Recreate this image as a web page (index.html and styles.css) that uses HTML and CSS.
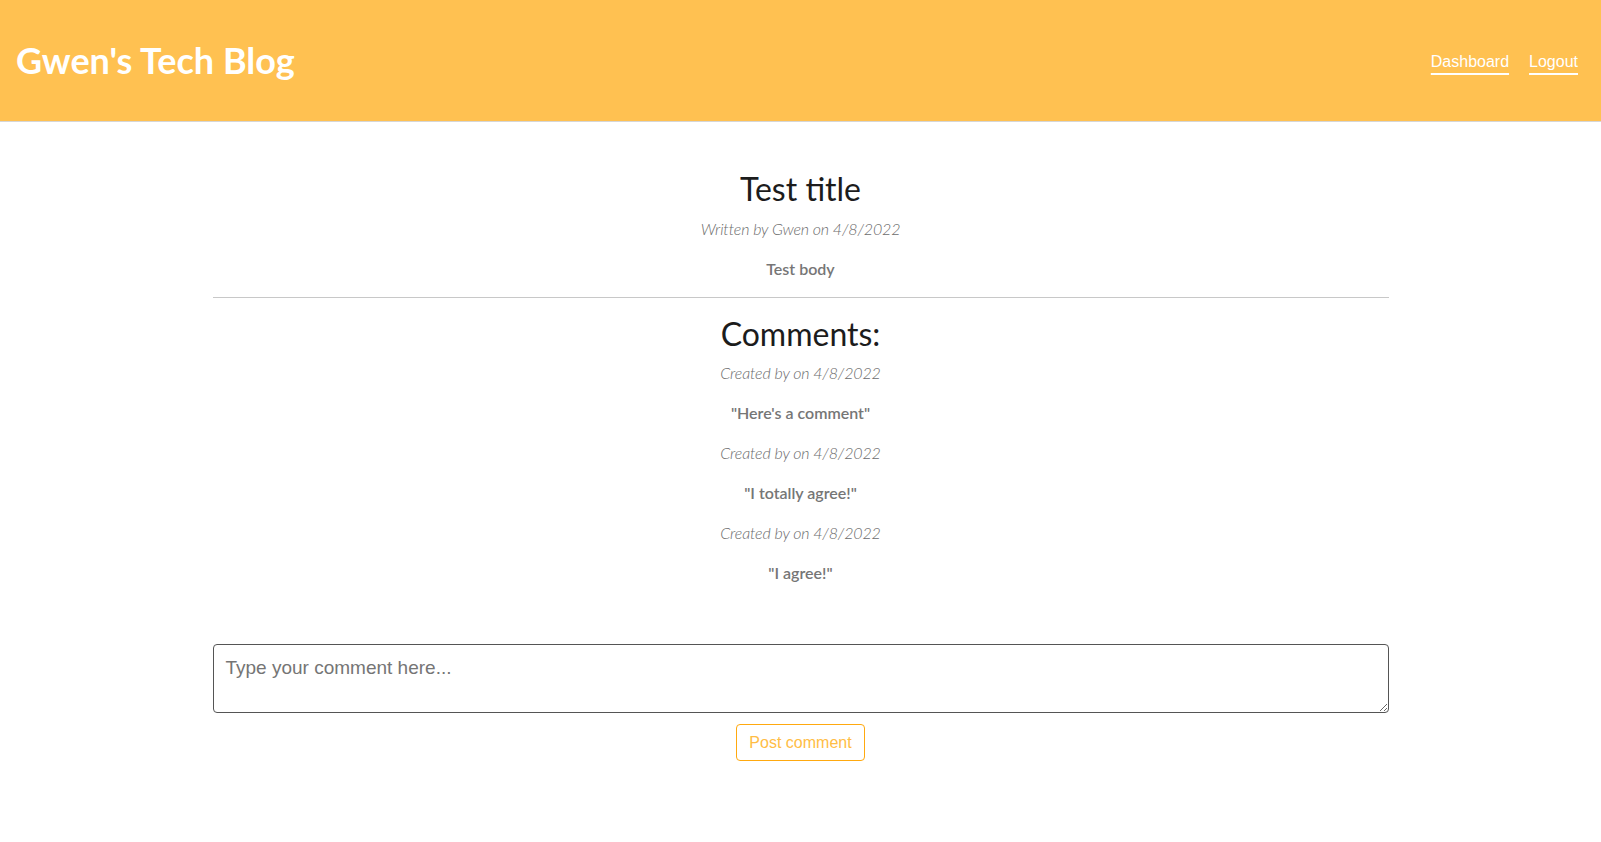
FILE: index.html
```html
<!DOCTYPE html>
<html lang="en">
<head>
<meta charset="utf-8">
<title>Gwen's Tech Blog</title>
<link rel="stylesheet" href="styles.css">
</head>
<body>
<header class="site-header">
  <h1 class="site-title">Gwen's Tech Blog</h1>
  <nav class="site-nav">
    <a href="#" class="nav-link">Dashboard</a>
    <a href="#" class="nav-link">Logout</a>
  </nav>
</header>
<main class="post">
  <h2 class="post-title">Test title</h2>
  <p class="meta meta-post">Written by Gwen on 4/8/2022</p>
  <p class="body-text">Test body</p>
  <hr class="divider">
  <h2 class="comments-title">Comments:</h2>
  <div class="comments">
    <p class="meta">Created by on 4/8/2022</p>
    <p class="body-text">"Here's a comment"</p>
    <p class="meta">Created by on 4/8/2022</p>
    <p class="body-text">"I totally agree!"</p>
    <p class="meta">Created by on 4/8/2022</p>
    <p class="body-text">"I agree!"</p>
  </div>
  <form class="comment-form">
    <textarea class="comment-input" placeholder="Type your comment here..."></textarea>
    <button type="button" class="post-btn">Post comment</button>
  </form>
</main>
</body>
</html>
```
FILE: styles.css
```css
html, body {
  margin: 0;
  padding: 0;
  background: #fff;
}
body {
  font-family: Lato, "Noto Sans", sans-serif;
  color: #1c1c1c;
}
.site-header {
  height: 121px;
  background: #ffc151;
  border-bottom: 1px solid #d6d6d6;
  display: flex;
  align-items: center;
  justify-content: space-between;
  padding: 0 23px 0 16px;
}
.site-title {
  margin: 0;
  font-size: 36px;
  font-weight: 700;
  color: #fff;
  line-height: 44px;
  padding-bottom: 2px;
}
.site-nav {
  display: flex;
  gap: 20px;
  padding-top: 2px;
}
.nav-link {
  font-family: "Liberation Sans", Arial, sans-serif;
  font-size: 16px;
  color: #fff;
  text-decoration: underline;
  text-decoration-thickness: 1.5px;
  text-underline-offset: 6px;
}
.post {
  width: 1176px;
  margin: 0 auto;
  padding-top: 48px;
  text-align: center;
}
.post-title, .comments-title {
  margin: 0;
  font-size: 32px;
  font-weight: 400;
  line-height: 38px;
  color: #1c1c1c;
}
.meta {
  margin: 0 0 16px;
  font-style: italic;
  font-weight: 300;
  font-size: 16px;
  line-height: 24px;
  color: #6c6c6c;
  letter-spacing: -0.15px;
}
.meta-post {
  margin-top: 9px;
}
.body-text {
  margin: 0 0 16px;
  font-weight: 600;
  font-size: 16px;
  line-height: 24px;
  color: #767676;
}
.divider {
  margin: 0 0 17px;
  border: 0;
  border-top: 1px solid #c8c8c8;
  height: 0;
}
.comments {
  margin-top: 8px;
}
.comment-form {
  margin-top: 59px;
  display: flex;
  flex-direction: column;
  align-items: center;
  padding-bottom: 60px;
}
.comment-input {
  display: block;
  box-sizing: border-box;
  width: 100%;
  height: 69px;
  padding: 12px;
  border: 1px solid #555;
  border-radius: 4px;
  font-family: "Liberation Sans", Arial, sans-serif;
  font-size: 19px;
  color: #333;
  resize: vertical;
  margin: 0 0 11px;
}
.comment-input::placeholder {
  color: #757575;
}
.post-btn {
  box-sizing: border-box;
  height: 37px;
  padding: 0 12px;
  background: #fff;
  border: 1px solid #ffa90f;
  border-radius: 4px;
  color: #ffbd45;
  font-family: "Liberation Sans", Arial, sans-serif;
  font-size: 16px;
  cursor: pointer;
}
```
